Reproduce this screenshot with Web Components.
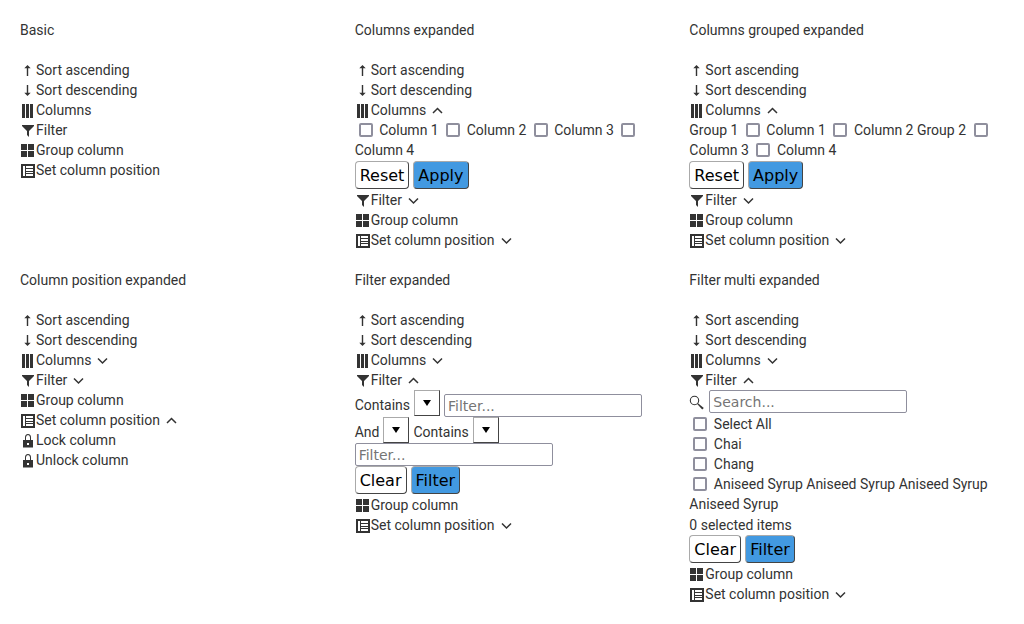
<!DOCTYPE html>
<html lang="en">
<head>
<meta charset="utf-8">
<meta name="viewport" content="width=device-width, initial-scale=1">
<title>Column menu</title>
<style>
  body {
    margin: 0;
    background: #fff;
    color: #333;
    font: 14px/20px Roboto, "Liberation Sans", sans-serif;
  }
</style>
</head>
<body>
<menu-gallery>
  <column-menu heading="Basic">
    <menu-item icon="sort-asc">Sort ascending</menu-item>
    <menu-item icon="sort-desc">Sort descending</menu-item>
    <menu-item icon="columns">Columns</menu-item>
    <menu-item icon="filter">Filter</menu-item>
    <menu-item icon="group">Group column</menu-item>
    <menu-item icon="position">Set column position</menu-item>
  </column-menu>

  <column-menu heading="Columns expanded">
    <menu-item icon="sort-asc">Sort ascending</menu-item>
    <menu-item icon="sort-desc">Sort descending</menu-item>
    <menu-item icon="columns" toggle="open">Columns</menu-item>
    <check-group>
      <check-option>Column 1</check-option>
      <check-option>Column 2</check-option>
      <check-option>Column 3</check-option>
      <check-option>Column 4</check-option>
    </check-group>
    <menu-actions reset="Reset" submit="Apply"></menu-actions>
    <menu-item icon="filter" toggle="closed">Filter</menu-item>
    <menu-item icon="group">Group column</menu-item>
    <menu-item icon="position" toggle="closed">Set column position</menu-item>
  </column-menu>

  <column-menu heading="Columns grouped expanded">
    <menu-item icon="sort-asc">Sort ascending</menu-item>
    <menu-item icon="sort-desc">Sort descending</menu-item>
    <menu-item icon="columns" toggle="open">Columns</menu-item>
    <check-group>
      <span>Group 1</span>
      <check-option>Column 1</check-option>
      <check-option>Column 2</check-option>
      <span>Group 2</span>
      <check-option>Column 3</check-option>
      <check-option>Column 4</check-option>
    </check-group>
    <menu-actions reset="Reset" submit="Apply"></menu-actions>
    <menu-item icon="filter" toggle="closed">Filter</menu-item>
    <menu-item icon="group">Group column</menu-item>
    <menu-item icon="position" toggle="closed">Set column position</menu-item>
  </column-menu>

  <column-menu heading="Column position expanded">
    <menu-item icon="sort-asc">Sort ascending</menu-item>
    <menu-item icon="sort-desc">Sort descending</menu-item>
    <menu-item icon="columns" toggle="closed">Columns</menu-item>
    <menu-item icon="filter" toggle="closed">Filter</menu-item>
    <menu-item icon="group">Group column</menu-item>
    <menu-item icon="position" toggle="open">Set column position</menu-item>
    <menu-item icon="lock">Lock column</menu-item>
    <menu-item icon="lock">Unlock column</menu-item>
  </column-menu>

  <column-menu heading="Filter expanded">
    <menu-item icon="sort-asc">Sort ascending</menu-item>
    <menu-item icon="sort-desc">Sort descending</menu-item>
    <menu-item icon="columns" toggle="closed">Columns</menu-item>
    <menu-item icon="filter" toggle="open">Filter</menu-item>
    <filter-fields>
      <drop-choice>Contains</drop-choice>
      <text-field class="beside" placeholder="Filter..."></text-field>
      <drop-choice>And</drop-choice>
      <drop-choice>Contains</drop-choice>
      <text-field placeholder="Filter..."></text-field>
    </filter-fields>
    <menu-actions reset="Clear" submit="Filter"></menu-actions>
    <menu-item icon="group">Group column</menu-item>
    <menu-item icon="position" toggle="closed">Set column position</menu-item>
  </column-menu>

  <column-menu heading="Filter multi expanded">
    <menu-item icon="sort-asc">Sort ascending</menu-item>
    <menu-item icon="sort-desc">Sort descending</menu-item>
    <menu-item icon="columns" toggle="closed">Columns</menu-item>
    <menu-item icon="filter" toggle="open">Filter</menu-item>
    <search-row><menu-icon name="search"></menu-icon><text-field placeholder="Search..."></text-field></search-row>
    <check-group>
      <check-option block>Select All</check-option>
      <check-option block>Chai</check-option>
      <check-option block>Chang</check-option>
      <check-option block>Aniseed Syrup Aniseed Syrup Aniseed Syrup Aniseed Syrup</check-option>
    </check-group>
    <div>0 selected items</div>
    <menu-actions reset="Clear" submit="Filter"></menu-actions>
    <menu-item icon="group">Group column</menu-item>
    <menu-item icon="position" toggle="closed">Set column position</menu-item>
  </column-menu>
</menu-gallery>

<script>
const ICONS = {
  'sort-asc': '<path d="M6.800 13V5.200H4.300L7.500 2l3.200 3.200H8.200V13z"/>',
  'sort-desc': '<path d="M6.800 2v7.800H4.300L7.500 13l3.200-3.200H8.200V2z"/>',
  'columns': '<path d="M2 1h3v14H2zM6 1h3v14H6zM10 1h3v14h-3z"/>',
  'filter': '<path d="M2 2h12v1L9 8v6l-2-2V8L2 3z"/>',
  'group': '<path d="M1 1h6v6H1zM8 1h6v6H8zM1 8h6v6H1zM8 8h6v6H8z"/>',
  'position': '<path fill-rule="evenodd" d="M1 1h14v14H1zM3 3v10h2V3zM6 3v2h7V3zM6 6v2h7V6zM6 9v1h7V9zM6 11v2h7v-2z"/>',
  'lock': '<path fill-rule="evenodd" d="M5 7V4.500a3 3.500 0 0 1 6 0V7h2v7.500H3V7zM6 7h4V4.500a2 2.500 0 0 0-4 0zM7 10v2h2v-2z"/>',
  'chevron-up': '<path fill="none" stroke="currentColor" stroke-width="1.500" d="M3 10l4.500-4.500L12 10"/>',
  'chevron-down': '<path fill="none" stroke="currentColor" stroke-width="1.500" d="M3 5.500L7.500 10 12 5.500"/>',
  'search': '<circle cx="5.500" cy="5.500" r="4.200" fill="none" stroke="currentColor" stroke-width="1.100"/><path d="M8.200 9L9 8.200l5.800 4.700-1.600 1.600z"/>'
};

function define(name, render) {
  customElements.define(name, class extends HTMLElement {
    constructor() {
      super();
      this.attachShadow({ mode: 'open' });
    }
    connectedCallback() {
      this.shadowRoot.innerHTML = render(this);
    }
  });
}

define('menu-icon', el => `
  <style>
    :host { display: block; flex: none; width: 16px; height: 16px; }
    svg { display: block; fill: currentColor; }
  </style>
  <svg width="16" height="16" viewBox="0 0 16 16" aria-hidden="true">${ICONS[el.getAttribute('name')]}</svg>`);

define('menu-gallery', () => `
  <style>
    :host {
      display: grid;
      grid-template-columns: repeat(3, minmax(0, 1fr));
      gap: 20px;
      padding: 20px;
    }
  </style>
  <slot></slot>`);

define('column-menu', el => `
  <style>
    :host { display: block; }
    h2 { margin: 0 0 20px; font: inherit; }
  </style>
  <h2>${el.getAttribute('heading')}</h2>
  <slot></slot>`);

define('menu-item', el => {
  const toggle = el.getAttribute('toggle');
  const expanded = toggle ? `aria-expanded="${toggle === 'open'}"` : '';
  const arrow = toggle
    ? `<menu-icon class="arrow" name="chevron-${toggle === 'open' ? 'up' : 'down'}"></menu-icon>` : '';
  return `
  <style>
    :host { display: block; }
    button {
      display: flex;
      padding: 0;
      border: 0;
      background: none;
      color: inherit;
      font: inherit;
      cursor: pointer;
    }
    menu-icon { margin-top: 3px; }
    .arrow { margin-left: 4px; }
  </style>
  <button type="button" ${expanded}><menu-icon name="${el.getAttribute('icon')}"></menu-icon><span><slot></slot></span>${arrow}</button>`;
});

define('filter-fields', () => `
  <style>
    :host { display: flex; flex-wrap: wrap; align-items: flex-start; column-gap: 4px; }
    ::slotted(.beside) { margin-top: 4px; }
  </style>
  <slot></slot>`);

define('check-group', () => `
  <style>:host { display: block; padding-bottom: 1px; }</style>
  <slot></slot>`);

define('search-row', () => `
  <style>
    :host { display: flex; align-items: center; gap: 4px; padding-bottom: 1px; }
    ::slotted(menu-icon) { margin-top: 2px; }
  </style>
  <slot></slot>`);

define('check-option', () => `
  <style>
    :host { display: inline; }
    :host([block]) { display: block; }
    input {
      appearance: none;
      box-sizing: border-box;
      width: 14px;
      height: 14px;
      margin: 0 3px 0 4px;
      border: 2px solid #8f8f9d;
      border-radius: 2px;
      background: #fff;
      vertical-align: -2px;
    }
    input:checked { background: #4299e1; }
  </style>
  <label><input type="checkbox"> <slot></slot></label>`);

define('text-field', el => `
  <style>
    :host { display: block; }
    input {
      display: block;
      box-sizing: border-box;
      width: 198px;
      height: 23px;
      padding: 0 3px;
      border: 1px solid #8f8f9d;
      border-radius: 2px;
      background: #fff;
      color: #000;
      font: 14px "DejaVu Sans", sans-serif;
    }
    input::placeholder { color: #757575; }
  </style>
  <input type="text" placeholder="${el.getAttribute('placeholder')}" aria-label="${el.getAttribute('placeholder')}">`);

define('drop-choice', () => `
  <style>
    :host { display: flex; gap: 4px; }
    span { padding-top: 5px; }
    button {
      display: flex;
      box-sizing: border-box;
      width: 26px;
      height: 26px;
      padding: 0;
      align-items: center;
      justify-content: center;
      border: 1px solid;
      border-color: #aaa #444 #444 #aaa;
      background: #fff;
      color: #000;
    }
    svg { display: block; fill: currentColor; }
  </style>
  <span id="name"><slot></slot></span><button type="button" aria-haspopup="listbox" aria-labelledby="name"><svg width="8" height="8" viewBox="0 0 8 8"><path d="M0 1h8L4 7z"/></svg></button>`);

define('menu-actions', el => `
  <style>
    :host { display: flex; gap: 4px; padding-bottom: 1px; }
    button {
      box-sizing: border-box;
      height: 28px;
      padding: 0 4px;
      border: 1px solid;
      border-color: #aaa #444 #444 #aaa;
      border-radius: 4px;
      background: #fff;
      color: #000;
      font: 16px "DejaVu Sans", sans-serif;
    }
    .primary { background: #4299e1; }
  </style>
  <button type="reset">${el.getAttribute('reset')}</button>
  <button type="submit" class="primary">${el.getAttribute('submit')}</button>`);
</script>
</body>
</html>
